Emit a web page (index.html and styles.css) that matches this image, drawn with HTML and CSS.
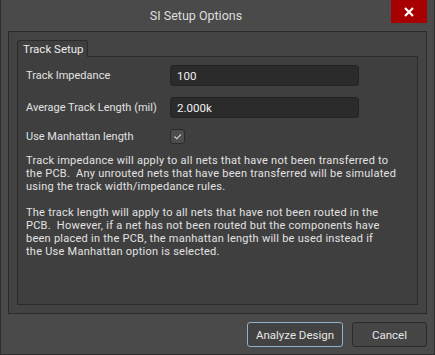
FILE: index.html
```html
<!DOCTYPE html>
<html>
<head>
  <meta charset="UTF-8">
  <title>SI Setup Options</title>
  <link rel="stylesheet" href="styles.css">
</head>
<body>
  <div class="window">
    <div class="titlebar">
      <div class="title">SI Setup Options</div>
      <button type="button" class="close-btn">
        <svg width="10" height="10" viewBox="0 0 10 10">
          <path d="M1 1 L9 9 M9 1 L1 9" stroke="#fff" stroke-width="2.2" fill="none"/>
        </svg>
      </button>
    </div>

    <div class="group">
      <div class="tabs">
        <div class="tab">Track Setup</div>
      </div>
      <div class="page">
        <div class="row">
          <label for="impedance">Track Impedance</label>
          <input type="text" id="impedance" value="100">
        </div>
        <div class="row">
          <label for="length">Average Track Length (mil)</label>
          <input type="text" id="length" value="2.000k">
        </div>
        <div class="row check-row">
          <label>Use Manhattan length</label>
          <span class="checkbox">
            <svg width="13" height="13" viewBox="0 0 13 13">
              <path d="M3.5 6.5 L5.8 8.8 L10 4.3" stroke="#d8d8d8" stroke-width="1.1" fill="none"/>
            </svg>
          </span>
        </div>

        <div class="note">
          <div>Track impedance will apply to all nets that have not been transferred to</div>
          <div>the PCB.&nbsp; Any unrouted nets that have been transferred will be simulated</div>
          <div>using the track width/impedance rules.</div>
        </div>
        <div class="note">
          <div>The track length will apply to all nets that have not been routed in the</div>
          <div>PCB.&nbsp; However, if a net has not been routed but the components have</div>
          <div>been placed in the PCB, the manhattan length will be used instead if</div>
          <div>the Use Manhattan option is selected.</div>
        </div>
      </div>
    </div>

    <div class="buttons">
      <button type="button" class="btn btn-default">Analyze Design</button>
      <button type="button" class="btn">Cancel</button>
    </div>
  </div>
</body>
</html>
```

FILE: styles.css
```css
/* Reset */
body, html {
  margin: 0;
  padding: 0;
  background-color: #4a4a4a;
  font-family: Roboto, "Open Sans", sans-serif;
  font-size: 11px;
  color: #e2e2e2;
}

/* Dialog window */
.window {
  box-sizing: border-box;
  width: 435px;
  height: 355px;
  border: 1px solid #2e2e2e;
  border-top: none;
  background-color: #4a4a4a;
}

/* Title bar */
.titlebar {
  display: flex;
  height: 31px;
}

.title {
  flex: 1;
  text-align: center;
  line-height: 31px;
  font-size: 12.5px;
  color: #dedede;
}

.close-btn {
  width: 36px;
  height: 23px;
  margin-right: 7px;
  padding: 0;
  border: none;
  background-color: #a80000;
  display: flex;
  align-items: center;
  justify-content: center;
}

/* Outer group */
.group {
  height: 283px;
  box-sizing: border-box;
  margin: 0 7px 0 7px;
  padding: 8px;
  border: 1px solid #2b2b2b;
  background-color: #434343;
  display: flex;
  flex-direction: column;
}

/* Tabs */
.tabs {
  display: flex;
  height: 16px;
}

.tab {
  box-sizing: border-box;
  width: 71px;
  height: 17px;
  padding-left: 5px;
  border: 1px solid #2b2b2b;
  border-bottom: none;
  border-radius: 3px 3px 0 0;
  background-color: #3f3f3f;
  line-height: 16px;
  font-size: 11.5px;
  color: #ececec;
  position: relative;
  z-index: 1;
}

.page {
  flex: 1;
  border: 1px solid #2b2b2b;
  background-color: #3f3f3f;
  padding: 8px 8px 0 8px;
}

/* Form rows */
.row {
  display: flex;
  align-items: center;
  height: 21px;
  margin-bottom: 11px;
}

.row label {
  width: 144px;
}

.row input {
  box-sizing: border-box;
  width: 189px;
  height: 21px;
  padding: 0 6px;
  border: 1px solid #242424;
  border-radius: 3px;
  background-color: #2b2b2b;
  color: #f0f0f0;
  font-family: inherit;
  font-size: 11.5px;
  outline: none;
}

.check-row {
  height: 15px;
  margin-bottom: 10px;
}

.checkbox {
  box-sizing: border-box;
  width: 15px;
  height: 15px;
  border: 1px solid #2a2a2a;
  border-radius: 3px;
  background-color: #4d4d4d;
  display: flex;
  align-items: center;
  justify-content: center;
}

/* Description text */
.note {
  margin-bottom: 13px;
  line-height: 13px;
  letter-spacing: 0.25px;
  white-space: nowrap;
}

/* Bottom buttons */
.buttons {
  display: flex;
  justify-content: flex-end;
  gap: 9px;
  padding: 8px 7px 0 0;
}

.btn {
  box-sizing: border-box;
  width: 75px;
  height: 25px;
  border: 1px solid #2a2a2a;
  border-radius: 3px;
  background-color: #454545;
  color: #e6e6e6;
  font-family: inherit;
  font-size: 11.5px;
}

.btn-default {
  width: 96px;
  border-color: #8fb2cf;
  background-color: #424242;
}
```
